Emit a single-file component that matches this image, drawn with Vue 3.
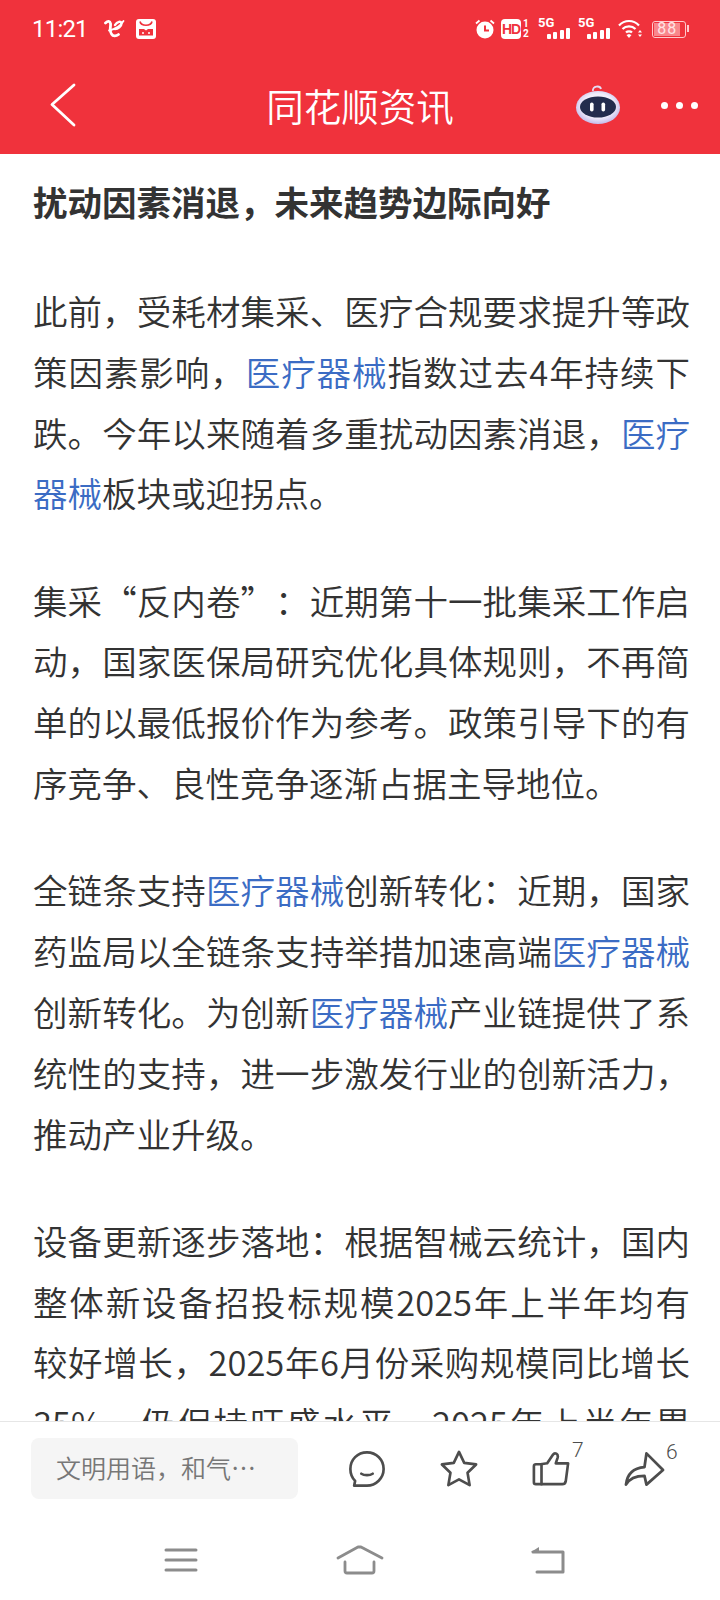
<template>
  <div class="page">
    <header class="top">
      <div class="status">
        <div class="status-left">
          <span class="time">11:21</span>
          <svg class="carrier" width="21" height="20" viewBox="0 0 21 20" fill="none" stroke="#fff" stroke-linecap="round">
            <path d="M1.500 4c2.500-2.500 4.500-2 5 .5.500 3-1.500 7 1 10.500 1.500 2.500 4.500 2.500 7 .5" stroke-width="2.800" />
            <path d="M5 11.500c5-1 11-4 14.500-9.500" stroke-width="1.800" />
            <path d="M11 6c2-3.500 6.500-4.500 6.500-1.500 0 3-3.500 5.500-6.500 5.500" stroke-width="2.400" />
          </svg>
          <svg width="20" height="20" viewBox="0 0 20 20">
            <rect width="20" height="20" rx="3" fill="#fff" />
            <path d="M4 2.500c1 5 11 5 12 0" fill="none" stroke="#f0323c" stroke-width="1.600" />
            <path d="M3 10h5l2 1.500 2-1.500h5v6.500H3z" fill="#f0323c" />
            <circle cx="7" cy="14" r="1" fill="#fff" />
            <circle cx="13" cy="14" r="1" fill="#fff" />
          </svg>
        </div>
        <div class="status-right">
          <svg class="alarm" width="20" height="20" viewBox="0 0 20 20">
            <circle cx="10" cy="11" r="8.500" fill="#fff" />
            <path d="M10 6.500v5h4" fill="none" stroke="#f0323c" stroke-width="2" />
            <path d="M1 4.500l3.500-3M19 4.500l-3.500-3" stroke="#fff" stroke-width="1.800" />
          </svg>
          <span class="hd">HD</span>
          <span class="sim"><span>1</span><span>2</span></span>
          <span class="signal" v-for="s in 2" :key="s">
            <b>5G</b>
            <i v-for="(h, n) in bars" :key="n" :style="{ height: h + 'px' }"></i>
          </span>
          <svg class="wifi" width="25" height="20" viewBox="0 0 25 20" fill="none" stroke="#fff" stroke-width="2.200">
            <path d="M1 6.500c5.500-6 14.500-6 20 0M4.500 10c3.500-3.500 9.500-3.500 13 0M8 13.500c1.500-1.500 4.500-1.500 6 0" />
            <path d="M8.500 16l2.500-1 2.500 1-2.500 3z" fill="#fff" stroke="none" />
            <path d="M20 13.500l2-2.500 2 2.500zM20 15.500l2 2.500 2-2.500z" fill="#fff" stroke="none" />
          </svg>
          <span class="battery"><span class="level">88</span></span>
        </div>
      </div>
      <div class="nav">
        <svg class="back" width="30" height="46" viewBox="0 0 30 46" fill="none" stroke="#fff" stroke-width="2.800" stroke-linecap="round" stroke-linejoin="round">
          <path d="M25 3 L3 22.500 L25 43" />
        </svg>
        <div class="nav-title">同花顺资讯</div>
        <svg class="robot" width="46" height="42" viewBox="0 0 46 42">
          <defs>
            <radialGradient id="shell" cx="50%" cy="45%" r="60%">
              <stop offset="60%" stop-color="#f1eefb" />
              <stop offset="100%" stop-color="#b9aee6" />
            </radialGradient>
          </defs>
          <path d="M18 9c-1-5 7-6 8-2" fill="none" stroke="#e6dcf5" stroke-width="1.800" />
          <ellipse cx="23" cy="25.500" rx="22" ry="16.500" fill="url(#shell)" />
          <ellipse cx="23" cy="25" rx="18" ry="10.500" fill="#232c4d" />
          <rect x="15" y="20.500" width="3.600" height="9" rx="1.800" fill="#fff" />
          <rect x="26.500" y="20.500" width="3.600" height="9" rx="1.800" fill="#fff" />
        </svg>
        <div class="dots"><i></i><i></i><i></i></div>
      </div>
    </header>

    <main class="article">
      <h1>扰动因素消退，未来趋势边际向好</h1>
      <p>此前，受耗材集采、医疗合规要求提升等政策因素影响，<a>医疗器械</a>指数过去4年持续下跌。今年以来随着多重扰动因素消退，<a>医疗器械</a>板块或迎拐点。</p>
      <p>集采“反内卷”：近期第十一批集采工作启动，国家医保局研究优化具体规则，不再简单的以最低报价作为参考。政策引导下的有序竞争、良性竞争逐渐占据主导地位。</p>
      <p>全链条支持<a>医疗器械</a>创新转化：近期，国家药监局以全链条支持举措加速高端<a>医疗器械</a>创新转化。为创新<a>医疗器械</a>产业链提供了系统性的支持，进一步激发行业的创新活力，推动产业升级。</p>
      <p>设备更新逐步落地：根据智械云统计，国内整体新设备招投标规模2025年上半年均有较好增长，2025年6月份采购规模同比增长35%，仍保持旺盛水平。2025年上半年累计招标规模也保持增长。</p>
    </main>

    <footer class="bottom">
      <div class="tools">
        <div class="input">文明用语，和气…</div>
        <div class="actions">
          <svg width="38" height="38" viewBox="0 0 40 40" fill="none" stroke="#4d4d4d" stroke-width="2.800" stroke-linecap="round" stroke-linejoin="round">
            <path d="M20 2.500c10 0 17.500 8 17.500 17.500s-8 17.500-17.500 17.500H6.500l1-5C4 29 2.500 25 2.500 20 2.500 10 10 2.500 20 2.500z" />
            <path d="M14 25c3 2 9 2 12 0" />
          </svg>
          <svg width="38" height="38" viewBox="0 0 40 40" fill="none" stroke="#4d4d4d" stroke-width="2.800" stroke-linejoin="round">
            <path d="M20 2l5.500 11.500 12.500 1.700-9 8.800 2.200 13L20 31 8.800 37 11 24 2 15.200l12.500-1.700z" />
          </svg>
          <div class="count-wrap">
            <svg width="38" height="36" viewBox="0 0 40 36" fill="none" stroke="#4d4d4d" stroke-width="2.800" stroke-linecap="round" stroke-linejoin="round">
              <path d="M9 13H4a2 2 0 0 0-2 2v17a2 2 0 0 0 2 2h28c2 0 3-1 3.500-3L38 12H25l2-6c1-4-3-6-5-3l-6 9-7 1z" />
              <path d="M10 13v21" />
            </svg>
            <span class="count">7</span>
          </div>
          <div class="count-wrap">
            <svg width="41" height="36" viewBox="0 0 42 36" fill="none" stroke="#4d4d4d" stroke-width="2.800" stroke-linecap="round" stroke-linejoin="round">
              <path d="M23 2l17 17-17 15-2-9c-8 0-15 2-19 9 1-9 6-17 19-18z" />
            </svg>
            <span class="count share">6</span>
          </div>
        </div>
      </div>
      <div class="sysbar">
        <svg width="34" height="26" viewBox="0 0 34 26" fill="none" stroke="#8c8c8c" stroke-width="3" stroke-linecap="round">
          <path d="M2 3h30M2 13h30M2 23h30" />
        </svg>
        <svg class="home" width="48" height="30" viewBox="0 0 48 30" fill="none" stroke="#8c8c8c" stroke-width="2.800" stroke-linecap="round" stroke-linejoin="round">
          <path d="M2 13L22 2h3l21 11" />
          <path d="M9 17v9a2 2 0 0 0 2 2h25a2 2 0 0 0 2-2v-9" />
        </svg>
        <svg width="36" height="28" viewBox="0 0 36 28" fill="none" stroke="#8c8c8c" stroke-width="3" stroke-linecap="round" stroke-linejoin="round">
          <path d="M3 6h30v20H7" />
          <path d="M9 1L1 6l8 0z" fill="#8c8c8c" stroke="none" />
        </svg>
      </div>
    </footer>
  </div>
</template>

<script setup>
const bars = [5, 7, 9, 11]
</script>

<style>
html, body { margin: 0; padding: 0; background: #fff; }
</style>

<style scoped>
.page {
  width: 720px;
  height: 1600px;
  display: flex;
  flex-direction: column;
  overflow: hidden;
  font-family: "Noto Sans CJK SC", "Noto Sans", sans-serif;
  background: #fff;
}
.top {
  height: 154px;
  flex: none;
  background: #f0323c;
  color: #fff;
}
.status {
  height: 58px;
  box-sizing: border-box;
  padding: 0 34px 0 32px;
  display: flex;
  justify-content: space-between;
  align-items: center;
}
.status-left, .status-right { display: flex; align-items: center; }
.status-left { gap: 11px; }
.status-left .time { margin-right: 5px; }
.time { font: 24px Roboto, sans-serif; letter-spacing: -.8px; }
.wifi { margin-left: 8px; }
.hd {
  background: #fff;
  color: #f0323c;
  font: 700 14px/20px "Liberation Sans", sans-serif;
  width: 20px;
  height: 20px;
  border-radius: 4px;
  text-align: center;
  letter-spacing: -1px;
  margin-left: 6px;
}
.sim {
  display: flex;
  flex-direction: column;
  font: 700 10px/10px Roboto, sans-serif;
  margin-left: 2px;
  width: 7px;
}
.signal {
  position: relative;
  width: 32px;
  height: 20px;
  display: flex;
  align-items: flex-end;
  justify-content: flex-end;
  gap: 2.500px;
  margin-left: 8px;
}
.signal b {
  position: absolute;
  left: 0;
  top: -3px;
  font: 700 13px/14px Roboto, sans-serif;
}
.signal i { width: 4px; background: #fff; border-radius: 1px; }
.battery {
  box-sizing: border-box;
  width: 34px;
  height: 17px;
  margin-left: 9px;
  border: 1.500px solid #ffc9cc;
  border-radius: 3px;
  padding: 1px;
  position: relative;
}
.battery::after {
  content: "";
  position: absolute;
  right: -4px;
  top: 3.500px;
  width: 2px;
  height: 7px;
  background: #ffc9cc;
}
.level {
  display: block;
  height: 100%;
  width: 88%;
  background: #f9878c;
  font: 16px/12px Roboto, sans-serif;
  letter-spacing: 1px;
  text-align: center;
  color: #ffe4e5;
}
.nav {
  height: 96px;
  position: relative;
  display: flex;
  align-items: center;
  justify-content: center;
}
.nav-title { font-size: 37.500px; line-height: 1; margin-top: -2px; font-weight: 350; }
.back { position: absolute; left: 49px; top: 24px; }
.robot { position: absolute; left: 575px; top: 24px; }
.dots { position: absolute; left: 661px; top: 44px; display: flex; gap: 8px; }
.dots i { width: 7px; height: 7px; background: #fff; border-radius: 50%; }

.article {
  flex: 1;
  min-height: 0;
  overflow: hidden;
  padding: 0 30px 0 33px;
  color: #333;
  text-spacing-trim: space-all;
}
h1 {
  margin: 24px 0 56px;
  font-size: 34.500px;
  line-height: 46px;
  font-weight: 700;
}
p {
  margin: 46.500px 0 0;
  font-size: 34.500px;
  line-height: 60.800px;
  font-weight: 350;
  text-align: justify;
}
a { color: #3b6cc4; }

.bottom {
  flex: none;
  height: 178px;
  background: #fff;
  border-top: 1px solid #e6e6e6;
}
.tools {
  display: flex;
  align-items: center;
  padding: 16px 0 0 31px;
}
.input {
  width: 267px;
  height: 61px;
  box-sizing: border-box;
  background: #f5f5f5;
  border-radius: 8px;
  padding-left: 25px;
  font-size: 25px;
  line-height: 58px;
  font-weight: 350;
  color: #777;
  text-spacing-trim: space-all;
}
.actions {
  display: flex;
  align-items: center;
  gap: 54px;
  margin-left: 50px;
}
.count-wrap { position: relative; display: flex; }
.count {
  position: absolute;
  left: 40px;
  top: -13px;
  font: 300 21px/24px Roboto, sans-serif;
  color: #4d4d4d;
}
.share { left: 42px; top: -11px; }
.sysbar {
  margin-top: 46px;
  padding: 0 154px 0 164px;
  display: flex;
  justify-content: space-between;
  align-items: center;
}
.home { margin-right: 8px; }
</style>
